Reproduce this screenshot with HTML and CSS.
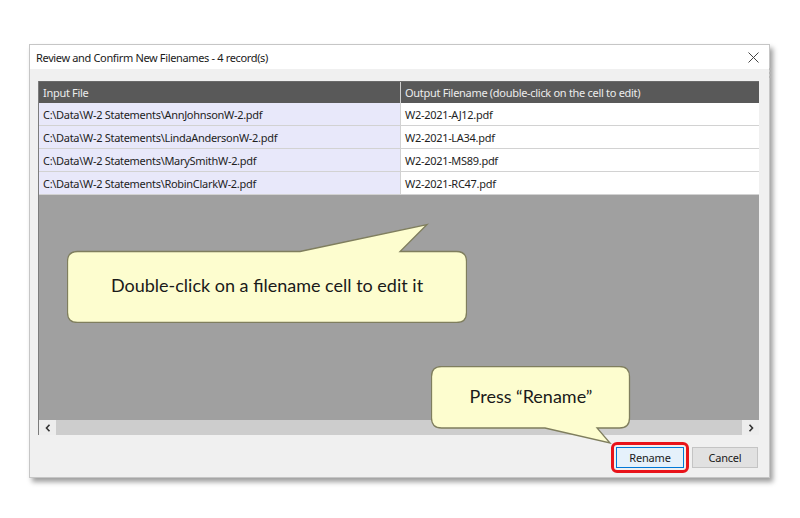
FILE: index.html
```html
<!DOCTYPE html>
<html>
<head>
<meta charset="utf-8">
<link rel="stylesheet" href="styles.css">
</head>
<body>
<div class="dialog">
  <div class="titlebar">
    <span class="title">Review and Confirm New Filenames - 4 record(s)</span>
    <svg class="close" width="11" height="11" viewBox="0 0 11 11"><path d="M0.5 0.5 L10.5 10.5 M10.5 0.5 L0.5 10.5" stroke="#444" stroke-width="1" fill="none"/></svg>
  </div>
  <div class="body">
    <div class="grid">
      <div class="row head">
        <div class="cell c1">Input File</div>
        <div class="cell c2">Output Filename (double-click on the cell to edit)</div>
      </div>
      <div class="row">
        <div class="cell c1">C:\Data\W-2 Statements\AnnJohnsonW-2.pdf</div>
        <div class="cell c2">W2-2021-AJ12.pdf</div>
      </div>
      <div class="row">
        <div class="cell c1">C:\Data\W-2 Statements\LindaAndersonW-2.pdf</div>
        <div class="cell c2">W2-2021-LA34.pdf</div>
      </div>
      <div class="row">
        <div class="cell c1">C:\Data\W-2 Statements\MarySmithW-2.pdf</div>
        <div class="cell c2">W2-2021-MS89.pdf</div>
      </div>
      <div class="row">
        <div class="cell c1">C:\Data\W-2 Statements\RobinClarkW-2.pdf</div>
        <div class="cell c2">W2-2021-RC47.pdf</div>
      </div>
      <div class="empty"></div>
      <div class="hscroll">
        <div class="sbtn">
          <svg width="6" height="8" viewBox="0 0 6 8"><path d="M4.5 0.8 L1.5 4 L4.5 7.2" stroke="#333" stroke-width="1.6" fill="none"/></svg>
        </div>
        <div class="track"></div>
        <div class="sbtn">
          <svg width="6" height="8" viewBox="0 0 6 8"><path d="M1.5 0.8 L4.5 4 L1.5 7.2" stroke="#333" stroke-width="1.6" fill="none"/></svg>
        </div>
      </div>
    </div>
    <div class="buttons">
      <span class="highlight"><button class="btn primary">Rename</button></span>
      <button class="btn">Cancel</button>
    </div>
  </div>
</div>
<div class="edge-mark"></div>

<div class="callout callout-a">
  <svg class="shape" width="400" height="100" viewBox="0 0 400 100"><path d="M10.5 28.5 H233 L360 1.5 L333 28.5 H389.5 Q399.5 28.5 399.5 38.5 V89.5 Q399.5 99.5 389.5 99.5 H10.5 Q0.5 99.5 0.5 89.5 V38.5 Q0.5 28.5 10.5 28.5 Z" fill="#fdfdcf" stroke="#7f7e5e" stroke-width="1.3"/></svg>
  <div class="ctext">Double-click on a filename cell to edit it</div>
</div>

<div class="callout callout-b">
  <svg class="shape" width="200" height="78" viewBox="0 0 200 78"><path d="M10.5 0.5 H188.5 Q198.5 0.5 198.5 10.5 V52 Q198.5 62 188.5 62 H166 L179 77 L114 62 H10.5 Q0.5 62 0.5 52 V10.5 Q0.5 0.5 10.5 0.5 Z" fill="#fdfdcf" stroke="#7f7e5e" stroke-width="1.3"/></svg>
  <div class="ctext">Press “Rename”</div>
</div>
</body>
</html>
```

FILE: styles.css
```css
html, body {
  margin: 0;
  padding: 0;
  background: #ffffff;
}
body {
  width: 800px;
  height: 518px;
  position: relative;
  overflow: hidden;
  font-family: "Noto Sans", "Open Sans", sans-serif;
}
.dialog {
  margin: 44px 0 0 29px;
  width: 739px;
  height: 432px;
  border: 1px solid #c6c6c6;
  background: #f0f0f0;
  box-shadow: 3px 4px 5px rgba(0, 0, 0, 0.38);
  display: flex;
  flex-direction: column;
}
.titlebar {
  height: 25px;
  background: #ffffff;
  display: flex;
  align-items: center;
  justify-content: space-between;
  padding: 0 10px 0 6px;
}
.title {
  font-size: 11px;
  letter-spacing: -0.35px;
  color: #1a1a1a;
}
.close {
  display: block;
}
.body {
  flex: 1;
  display: flex;
  flex-direction: column;
  padding: 12px 10px 4px 8px;
}
.grid {
  height: 354px;
  display: flex;
  flex-direction: column;
  background: #a0a0a0;
  border-left: 1px solid #7c7c7c;
}
.row {
  display: flex;
  height: 22px;
  border-bottom: 1px solid #d2d2d2;
  font-size: 11px;
  letter-spacing: -0.3px;
  color: #1e1e1e;
}
.row.head {
  height: 21px;
  border-bottom: none;
  background: #595959;
  color: #ececec;
  border-top: 1px solid #6a6a6a;
}
.cell {
  display: flex;
  align-items: center;
  padding-left: 4px;
  white-space: nowrap;
  overflow: hidden;
}
.c1 {
  width: 357px;
  background: #e8e8fa;
}
.c2 {
  flex: 1;
  background: #ffffff;
  border-left: 1px solid #d2d2d2;
}
.head .c1, .head .c2 {
  background: #595959;
}
.head .c2 {
  border-left: 1px solid #cfcfcf;
}
.empty {
  flex: 1;
}
.hscroll {
  height: 15px;
  display: flex;
  background: #cdcdcd;
}
.sbtn {
  width: 17px;
  background: #ededed;
  display: flex;
  align-items: center;
  justify-content: center;
}
.track {
  flex: 1;
}
.buttons {
  display: flex;
  justify-content: flex-end;
  align-items: center;
  gap: 3px;
  margin-top: 7px;
  margin-right: 1px;
}
.highlight {
  display: inline-flex;
  padding: 2px;
  border: 3px solid #e8131a;
  border-radius: 6px;
}
.btn {
  width: 66px;
  height: 21px;
  font-family: "Noto Sans", "Open Sans", sans-serif;
  font-size: 11px;
  letter-spacing: -0.2px;
  color: #1a1a1a;
  background: #e1e1e1;
  border: 1px solid #c4c4c4;
  padding: 0;
  margin: 0;
}
.btn.primary {
  width: 68px;
  background: #e5f1fb;
  border: 1px solid #0078d7;
}
.edge-mark {
  position: absolute;
  left: 769px;
  top: 68px;
  width: 2px;
  height: 12px;
  background: repeating-linear-gradient(to bottom, #b5b5b5 0 2px, transparent 2px 4px);
}
.callout {
  position: absolute;
}
.callout .shape {
  position: absolute;
  left: 0;
  top: 0;
}
.ctext {
  position: absolute;
  left: 0;
  right: 0;
  text-align: center;
  font-family: "Lato", "Open Sans", sans-serif;
  font-size: 18px;
  color: #1a1a1a;
}
.callout-a {
  left: 67px;
  top: 223px;
  width: 400px;
  height: 100px;
}
.callout-a .ctext {
  top: 51px;
}
.callout-b {
  left: 431px;
  top: 366px;
  width: 200px;
  height: 78px;
}
.callout-b .ctext {
  top: 19px;
}
```
